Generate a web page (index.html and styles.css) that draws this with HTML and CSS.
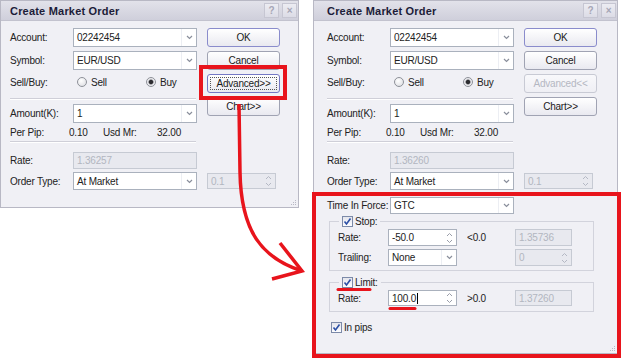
FILE: index.html
```html
<!DOCTYPE html>
<html lang="en">
<head>
    <meta charset="UTF-8">
    <title>Create Market Order</title>
    <link rel="stylesheet" href="styles.css">
</head>
<body>
    <div class="stage">
        <!-- basic dialog -->
        <div class="dialog dialog-small">
            <div class="titlebar">
                <span class="title">Create Market Order</span>
                <span class="tb-btn">?</span>
                <span class="tb-btn">&#215;</span>
            </div>
            <div class="dialog-body">
                <div class="top">
                    <div class="form">
                        <div class="row h19">
                            <span class="label">Account:</span>
                            <div class="combo"><span class="val">02242454</span><span class="drop"><svg width="7" height="5" viewBox="0 0 7 5"><polyline points="1,1 3.5,3.5 6,1" fill="none" stroke="#8a8f9c" stroke-width="1.2"/></svg></span></div>
                        </div>
                        <div class="row h19 mt4">
                            <span class="label">Symbol:</span>
                            <div class="combo"><span class="val">EUR/USD</span><span class="drop"><svg width="7" height="5" viewBox="0 0 7 5"><polyline points="1,1 3.5,3.5 6,1" fill="none" stroke="#8a8f9c" stroke-width="1.2"/></svg></span></div>
                        </div>
                        <div class="row h18 mt3">
                            <span class="label">Sell/Buy:</span>
                            <div class="radios">
                                <span class="radio-item"><span class="radio"></span>Sell</span>
                                <span class="radio-item"><span class="radio on"></span>Buy</span>
                            </div>
                        </div>
                        <div class="separator"></div>
                        <div class="row h19 mt4">
                            <span class="label">Amount(K):</span>
                            <div class="combo"><span class="val">1</span><span class="drop"><svg width="7" height="5" viewBox="0 0 7 5"><polyline points="1,1 3.5,3.5 6,1" fill="none" stroke="#8a8f9c" stroke-width="1.2"/></svg></span></div>
                        </div>
                    </div>
                    <div class="buttons">
                        <button class="btn default">OK</button>
                        <button class="btn">Cancel</button>
                        <button class="btn focused">Advanced&gt;&gt;</button>
                        <button class="btn">Chart&gt;&gt;</button>
                    </div>
                </div>
                <div class="row h16 mt1 pip-row">
                    <span class="pp-label">Per Pip:</span>
                    <span class="pp-val">0.10</span>
                    <span class="pp-label2">Usd Mr:</span>
                    <span>32.00</span>
                </div>
                <div class="separator short"></div>
                <div class="row h17 mt9">
                    <span class="label">Rate:</span>
                    <div class="field disabled"><span class="val">1.36257</span></div>
                </div>
                <div class="row h18 mt3">
                    <span class="label">Order Type:</span>
                    <div class="combo"><span class="val">At Market</span><span class="drop"><svg width="7" height="5" viewBox="0 0 7 5"><polyline points="1,1 3.5,3.5 6,1" fill="none" stroke="#8a8f9c" stroke-width="1.2"/></svg></span></div>
                    <div class="spin disabled order-spin"><span class="val">0.1</span><span class="arrows"><svg width="7" height="12" viewBox="0 0 7 12"><polyline points="1,4 3.5,1.5 6,4" fill="none" stroke="#b4b8c4" stroke-width="1"/><polyline points="1,8 3.5,10.5 6,8" fill="none" stroke="#b4b8c4" stroke-width="1"/></svg></span></div>
                </div>
            </div>
            <svg class="grip" width="8" height="8" viewBox="0 0 8 8"><rect x="6" y="2" width="1" height="1" fill="#b8b8c4"/><rect x="4" y="4" width="1" height="1" fill="#b8b8c4"/><rect x="6" y="4" width="1" height="1" fill="#b8b8c4"/><rect x="2" y="6" width="1" height="1" fill="#b8b8c4"/><rect x="4" y="6" width="1" height="1" fill="#b8b8c4"/><rect x="6" y="6" width="1" height="1" fill="#b8b8c4"/></svg>
        </div>

        <!-- expanded dialog -->
        <div class="dialog dialog-large">
            <div class="titlebar">
                <span class="title">Create Market Order</span>
                <span class="tb-btn">?</span>
                <span class="tb-btn">&#215;</span>
            </div>
            <div class="dialog-body">
                <div class="top">
                    <div class="form">
                        <div class="row h19">
                            <span class="label">Account:</span>
                            <div class="combo"><span class="val">02242454</span><span class="drop"><svg width="7" height="5" viewBox="0 0 7 5"><polyline points="1,1 3.5,3.5 6,1" fill="none" stroke="#8a8f9c" stroke-width="1.2"/></svg></span></div>
                        </div>
                        <div class="row h19 mt4">
                            <span class="label">Symbol:</span>
                            <div class="combo"><span class="val">EUR/USD</span><span class="drop"><svg width="7" height="5" viewBox="0 0 7 5"><polyline points="1,1 3.5,3.5 6,1" fill="none" stroke="#8a8f9c" stroke-width="1.2"/></svg></span></div>
                        </div>
                        <div class="row h18 mt3">
                            <span class="label">Sell/Buy:</span>
                            <div class="radios">
                                <span class="radio-item"><span class="radio"></span>Sell</span>
                                <span class="radio-item"><span class="radio on"></span>Buy</span>
                            </div>
                        </div>
                        <div class="separator"></div>
                        <div class="row h19 mt4">
                            <span class="label">Amount(K):</span>
                            <div class="combo"><span class="val">1</span><span class="drop"><svg width="7" height="5" viewBox="0 0 7 5"><polyline points="1,1 3.5,3.5 6,1" fill="none" stroke="#8a8f9c" stroke-width="1.2"/></svg></span></div>
                        </div>
                    </div>
                    <div class="buttons">
                        <button class="btn default">OK</button>
                        <button class="btn">Cancel</button>
                        <button class="btn off">Advanced&lt;&lt;</button>
                        <button class="btn">Chart&gt;&gt;</button>
                    </div>
                </div>
                <div class="row h16 mt1 pip-row">
                    <span class="pp-label">Per Pip:</span>
                    <span class="pp-val">0.10</span>
                    <span class="pp-label2">Usd Mr:</span>
                    <span>32.00</span>
                </div>
                <div class="separator short"></div>
                <div class="row h17 mt9">
                    <span class="label">Rate:</span>
                    <div class="field disabled"><span class="val">1.36260</span></div>
                </div>
                <div class="row h18 mt3">
                    <span class="label">Order Type:</span>
                    <div class="combo"><span class="val">At Market</span><span class="drop"><svg width="7" height="5" viewBox="0 0 7 5"><polyline points="1,1 3.5,3.5 6,1" fill="none" stroke="#8a8f9c" stroke-width="1.2"/></svg></span></div>
                    <div class="spin disabled order-spin"><span class="val">0.1</span><span class="arrows"><svg width="7" height="12" viewBox="0 0 7 12"><polyline points="1,4 3.5,1.5 6,4" fill="none" stroke="#b4b8c4" stroke-width="1"/><polyline points="1,8 3.5,10.5 6,8" fill="none" stroke="#b4b8c4" stroke-width="1"/></svg></span></div>
                </div>

                <!-- advanced part -->
                <div class="row h17 mt7">
                    <span class="label">Time In Force:</span>
                    <div class="combo"><span class="val">GTC</span><span class="drop"><svg width="7" height="5" viewBox="0 0 7 5"><polyline points="1,1 3.5,3.5 6,1" fill="none" stroke="#8a8f9c" stroke-width="1.2"/></svg></span></div>
                </div>
                <fieldset class="group stop-group">
                    <legend><span class="check"><svg width="9" height="9" viewBox="0 0 9 9"><polyline points="1.5,4.5 3.5,7 7.5,1.5" fill="none" stroke="#2b4fa6" stroke-width="1.6"/></svg></span>Stop:</legend>
                    <div class="row h17">
                        <span class="g-label">Rate:</span>
                        <div class="spin"><span class="val">-50.0</span><span class="arrows"><svg width="7" height="12" viewBox="0 0 7 12"><polyline points="1,4 3.5,1.5 6,4" fill="none" stroke="#9a9eaa" stroke-width="1"/><polyline points="1,8 3.5,10.5 6,8" fill="none" stroke="#9a9eaa" stroke-width="1"/></svg></span></div>
                        <span class="hint">&lt;0.0</span>
                        <div class="field disabled small"><span class="val">1.35736</span></div>
                    </div>
                    <div class="row h17 mt3">
                        <span class="g-label">Trailing:</span>
                        <div class="combo narrow"><span class="val">None</span><span class="drop"><svg width="7" height="5" viewBox="0 0 7 5"><polyline points="1,1 3.5,3.5 6,1" fill="none" stroke="#8a8f9c" stroke-width="1.2"/></svg></span></div>
                        <span class="hint"></span>
                        <div class="spin disabled small"><span class="val">0</span><span class="arrows"><svg width="7" height="12" viewBox="0 0 7 12"><polyline points="1,4 3.5,1.5 6,4" fill="none" stroke="#b4b8c4" stroke-width="1"/><polyline points="1,8 3.5,10.5 6,8" fill="none" stroke="#b4b8c4" stroke-width="1"/></svg></span></div>
                    </div>
                </fieldset>
                <fieldset class="group limit-group">
                    <legend><span class="check"><svg width="9" height="9" viewBox="0 0 9 9"><polyline points="1.5,4.5 3.5,7 7.5,1.5" fill="none" stroke="#2b4fa6" stroke-width="1.6"/></svg></span>Limit:</legend>
                    <div class="row h16">
                        <span class="g-label">Rate:</span>
                        <div class="spin"><span class="val">100.0<span class="caret"></span></span><span class="arrows"><svg width="7" height="12" viewBox="0 0 7 12"><polyline points="1,4 3.5,1.5 6,4" fill="none" stroke="#9a9eaa" stroke-width="1"/><polyline points="1,8 3.5,10.5 6,8" fill="none" stroke="#9a9eaa" stroke-width="1"/></svg></span></div>
                        <span class="hint">&gt;0.0</span>
                        <div class="field disabled small"><span class="val">1.37260</span></div>
                    </div>
                </fieldset>
                <div class="pips">
                    <span class="check"><svg width="9" height="9" viewBox="0 0 9 9"><polyline points="1.5,4.5 3.5,7 7.5,1.5" fill="none" stroke="#2b4fa6" stroke-width="1.6"/></svg></span>In pips
                </div>
            </div>
            <svg class="grip" width="8" height="8" viewBox="0 0 8 8"><rect x="6" y="2" width="1" height="1" fill="#b8b8c4"/><rect x="4" y="4" width="1" height="1" fill="#b8b8c4"/><rect x="6" y="4" width="1" height="1" fill="#b8b8c4"/><rect x="2" y="6" width="1" height="1" fill="#b8b8c4"/><rect x="4" y="6" width="1" height="1" fill="#b8b8c4"/><rect x="6" y="6" width="1" height="1" fill="#b8b8c4"/></svg>
        </div>
    </div>

    <!-- red annotations drawn over the screenshots -->
    <svg class="annotations" width="624" height="361" viewBox="0 0 624 361">
        <rect x="201" y="67" width="84" height="31" fill="none" stroke="#e8141c" stroke-width="4"/>
        <rect x="314" y="194" width="305" height="162" fill="none" stroke="#e8141c" stroke-width="4"/>
        <path d="M239 104 L240 172 C241 232 262 258 302 271" fill="none" stroke="#e8141c" stroke-width="3.5"/>
        <path d="M280 243 L302 271 L272 279" fill="none" stroke="#e8141c" stroke-width="3.5"/>
        <line x1="338" y1="289.5" x2="370" y2="289.5" stroke="#e8141c" stroke-width="3" stroke-linecap="round"/>
        <line x1="390" y1="308.5" x2="415" y2="308.5" stroke="#e8141c" stroke-width="3" stroke-linecap="round"/>
    </svg>
</body>
</html>
```

FILE: styles.css
```css
body {
    margin: 0;
    width: 624px;
    height: 361px;
    overflow: hidden;
    position: relative;
    background-color: #fff;
    font-family: "Liberation Sans", Arial, sans-serif;
    font-size: 10px;
    letter-spacing: -0.2px;
    color: #222;
}
.stage {
    display: flex;
    align-items: flex-start;
    gap: 14px;
}
.dialog {
    position: relative;
    box-sizing: border-box;
    background-color: #f0f0f5;
    border: 1px solid #b8b8c4;
}
.dialog-small {
    width: 299px;
    height: 208px;
    --pad: 9px;
}
.dialog-large {
    width: 305px;
    height: 354px;
    --pad: 13px;
}
.titlebar {
    height: 20px;
    box-sizing: border-box;
    display: flex;
    align-items: center;
    gap: 3px;
    padding-left: var(--pad);
    padding-right: 1px;
    background: linear-gradient(#e2e2ea, #cfcfdb);
    border-bottom: 1px solid #c2c2ce;
}
.title {
    flex: 1;
    font-size: 11px;
    font-weight: bold;
    letter-spacing: 0.2px;
    color: #1c1c38;
}
.tb-btn {
    width: 15px;
    height: 15px;
    box-sizing: border-box;
    border: 1px solid #c6c6d2;
    background: linear-gradient(#ececf2, #dcdce6);
    color: #a6a6b6;
    font-size: 10px;
    font-weight: bold;
    display: flex;
    align-items: center;
    justify-content: center;
}
.dialog-body {
    padding: 7px 0 0 var(--pad);
}
.top {
    display: flex;
    gap: 10px;
}
.form {
    width: 187px;
}
.buttons {
    display: flex;
    flex-direction: column;
    gap: 4px;
    width: 73px;
}
.row {
    display: flex;
    align-items: center;
}
.h16 { height: 16px; }
.h17 { height: 17px; }
.h18 { height: 18px; }
.h19 { height: 19px; }
.mt1 { margin-top: 1px; }
.mt3 { margin-top: 3px; }
.mt4 { margin-top: 4px; }
.mt7 { margin-top: 7px; }
.mt9 { margin-top: 9px; }
.label {
    width: 63px;
    flex-shrink: 0;
}
.combo, .field, .spin {
    box-sizing: border-box;
    height: 100%;
    display: flex;
    align-items: center;
    background-color: #fff;
    border: 1px solid #aab1bd;
}
.combo, .field {
    width: 124px;
}
.val {
    flex: 1;
    padding-left: 3px;
    white-space: nowrap;
}
.drop {
    width: 14px;
    height: 100%;
    border-left: 1px solid #eceef3;
    display: flex;
    align-items: center;
    justify-content: center;
}
.arrows {
    width: 13px;
    display: flex;
    align-items: center;
    justify-content: center;
}
.disabled {
    background-color: #e8e9ef;
    border-color: #c6cad3;
    color: #b2b6c0;
}
.order-spin {
    width: 73px;
    height: 16px;
    margin-left: 10px;
}
.radios {
    display: flex;
    padding-left: 4px;
}
.radio-item {
    display: flex;
    align-items: center;
    gap: 4px;
    width: 69px;
}
.radio {
    width: 10px;
    height: 10px;
    box-sizing: border-box;
    border-radius: 50%;
    border: 1px solid #8e9199;
    background: radial-gradient(circle at 40% 35%, #fff, #d8d9de);
}
.radio.on {
    background: radial-gradient(circle, #2c2c30 0 1.8px, #8a8a90 2.3px, #e6e6ea 3px, #fafafa 100%);
}
.separator {
    margin-top: 7px;
    height: 0;
    border-top: 1px solid #cfcfd8;
    border-bottom: 1px solid #fff;
    width: 186px;
}
.separator.short {
    margin-top: 1px;
}
.btn {
    height: 19px;
    box-sizing: border-box;
    padding: 0;
    border: 1px solid #a0a3b3;
    border-radius: 3px;
    background: linear-gradient(#ffffff, #e9e9f0);
    font-family: inherit;
    font-size: 10px;
    letter-spacing: -0.2px;
    color: #1a1a1a;
}
.btn.default {
    border-color: #8a8ccc;
}
.btn.focused {
    border-color: #7478c4;
    outline: 1px dotted #555;
    outline-offset: -4px;
}
.btn.off {
    color: #b4b7c2;
    border-color: #c8cad4;
    background: linear-gradient(#f8f8fb, #efeff4);
}
.pip-row {
    width: 200px;
}
.pp-label { width: 59px; }
.pp-val { width: 34px; }
.pp-label2 { width: 54px; }
.group {
    margin: 1px 0 0 2px;
    padding: 2px 0 4px 8px;
    width: 265px;
    box-sizing: border-box;
    border: 1px solid #d2d3dc;
    min-width: 0;
}
.limit-group {
    margin-top: 5px;
    padding-bottom: 5px;
}
legend {
    display: flex;
    align-items: center;
    gap: 2px;
    height: 12px;
    padding: 0 3px;
    margin-left: 1px;
}
.check {
    width: 11px;
    height: 11px;
    box-sizing: border-box;
    border: 1px solid #7c8aa8;
    background: linear-gradient(#e4e5ec, #fdfdff);
    display: flex;
    align-items: center;
    justify-content: center;
}
.g-label {
    width: 50px;
    flex-shrink: 0;
}
.spin {
    width: 69px;
}
.combo.narrow {
    width: 69px;
}
.hint {
    width: 58px;
    padding-left: 10px;
    box-sizing: border-box;
    flex-shrink: 0;
}
.small {
    width: 57px;
}
.caret {
    display: inline-block;
    width: 1px;
    height: 11px;
    margin-left: 1px;
    vertical-align: -2px;
    background-color: #000;
}
.pips {
    display: flex;
    align-items: center;
    gap: 2px;
    margin: 10px 0 0 4px;
    height: 11px;
}
.grip {
    position: absolute;
    right: 1px;
    bottom: 1px;
}
.annotations {
    position: absolute;
    left: 0;
    top: 0;
    pointer-events: none;
}
```
